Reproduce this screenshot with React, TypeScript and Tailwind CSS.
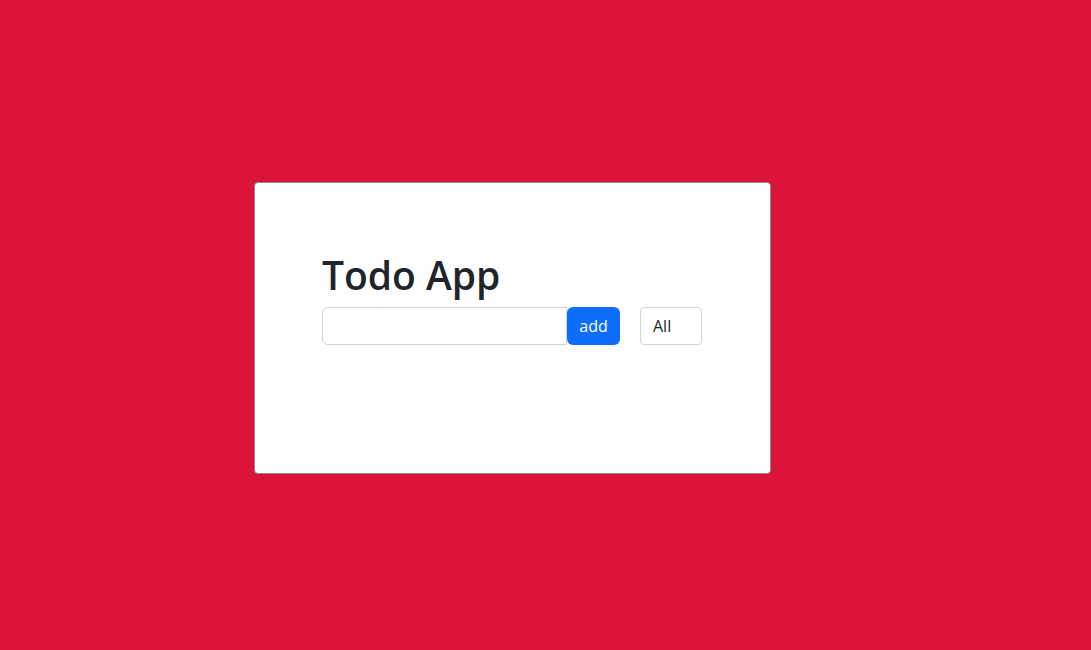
import { useState } from "react";

export default function App() {
  const [todo, setTodo] = useState("");
  const [filter, setFilter] = useState("All");

  return (
    <div className="min-h-[650px] w-full bg-[#dc143c] pl-[254px] pt-[182px] font-['Open_Sans',sans-serif] text-[#212529]">
      <div className="h-[292px] w-[517px] rounded border border-[#8a8a8a] bg-white px-[67px] pt-[68px]">
        <h1 className="mb-[8px] text-[39px] font-semibold leading-[48px]">Todo App</h1>
        <div className="flex items-center">
          <input
            type="text"
            value={todo}
            onChange={(e) => setTodo(e.target.value)}
            className="h-[38px] w-[245px] rounded-l-md border border-[#ced4da] px-3 text-base outline-none"
          />
          <button className="h-[38px] w-[53px] rounded-md bg-[#0d6efd] text-base text-white">
            add
          </button>
          <select
            value={filter}
            onChange={(e) => setFilter(e.target.value)}
            className="ml-5 h-[38px] w-[62px] appearance-none rounded border border-[#ced4da] bg-white pl-3 text-base outline-none"
          >
            <option>All</option>
            <option>Completed</option>
            <option>Pending</option>
          </select>
        </div>
      </div>
    </div>
  );
}
